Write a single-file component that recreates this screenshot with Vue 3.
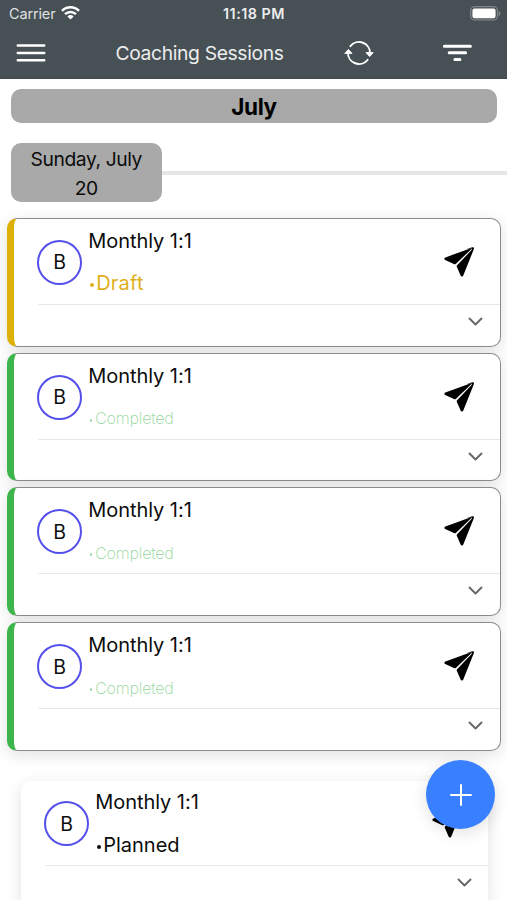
<script setup>
import { ref } from 'vue';

const month = ref('July');
const day = ref('Sunday, July 20');

const sessions = ref([
  { id: 1, initial: 'B', title: 'Monthly 1:1', status: 'Draft' },
  { id: 2, initial: 'B', title: 'Monthly 1:1', status: 'Completed' },
  { id: 3, initial: 'B', title: 'Monthly 1:1', status: 'Completed' },
  { id: 4, initial: 'B', title: 'Monthly 1:1', status: 'Completed' },
  { id: 5, initial: 'B', title: 'Monthly 1:1', status: 'Planned' }
]);
</script>

<template>
  <div class="screen">
    <header class="app-header">
      <div class="status-bar">
        <div class="carrier">
          <span class="carrier-name">Carrier</span>
          <svg class="wifi" width="19" height="14" viewBox="0 0 19 14">
            <g fill="none" stroke="#fff" stroke-width="2.5">
              <path d="M1 4.9a12 12 0 0 1 17 0" />
              <path d="M4 8.2a7.8 7.8 0 0 1 11 0" />
            </g>
            <path d="M9.5 13.6 6.4 10.4a4.4 4.4 0 0 1 6.2 0z" fill="#fff" />
          </svg>
        </div>
        <span class="clock">11:18 PM</span>
        <div class="battery-wrap">
          <svg width="31" height="15" viewBox="0 0 31 15">
            <rect x="0.7" y="0.7" width="26.8" height="13.2" rx="4" fill="none" stroke="#7f8589" stroke-width="1.3" />
            <rect x="2.4" y="2.5" width="23.2" height="9.8" rx="2.2" fill="#fff" />
            <path d="M28.8 5.2c2 .8 2 3.8 0 4.6z" fill="#8b9093" />
          </svg>
        </div>
      </div>

      <div class="toolbar">
        <button type="button" class="icon-btn menu-btn" aria-label="Menu">
          <svg width="30" height="20" viewBox="0 0 30 20">
            <path d="M1.8 2.5h26.4M1.8 9.9h26.4M1.8 17.3h26.4" stroke="#fff" stroke-width="2.5" stroke-linecap="round" />
          </svg>
        </button>
        <h1 class="page-title">Coaching Sessions</h1>
        <button type="button" class="icon-btn refresh-btn" aria-label="Refresh">
          <svg width="30" height="26" viewBox="0 0 30 26">
            <g fill="none" stroke="#fff" stroke-width="1.9" stroke-linecap="round">
              <path d="M6.4 6.2A11 11 0 0 1 26 13.6" />
              <path d="M23.6 19.8A11 11 0 0 1 4 12.4" />
            </g>
            <path d="M22 12.6h7.2l-3.6 4z M0.8 13.4H8L4.4 9.4z" fill="#fff" stroke="#fff" stroke-width="0.9" stroke-linejoin="round" />
          </svg>
        </button>
        <button type="button" class="icon-btn filter-btn" aria-label="Filter">
          <svg width="30" height="20" viewBox="0 0 30 20">
            <path d="M2.4 3.2h26M7.2 9.8h16.4M12.9 16.6h5" stroke="#fff" stroke-width="3" stroke-linecap="round" />
          </svg>
        </button>
      </div>
    </header>

    <main class="content">
      <div class="month-bar">{{ month }}</div>

      <div class="day-row">
        <div class="day-badge">{{ day }}</div>
        <div class="day-line"></div>
      </div>

      <div class="session-list">
        <article
          v-for="session in sessions"
          :key="session.id"
          class="session-card"
          :class="session.status.toLowerCase()"
        >
          <div class="card-main">
            <div class="avatar">{{ session.initial }}</div>
            <div class="card-text">
              <div class="card-title">{{ session.title }}</div>
              <div class="card-status"><span class="dot"></span>{{ session.status }}</div>
            </div>
            <svg class="send" width="30" height="30" viewBox="0 0 30 30">
              <path d="M0.5 11.2Q0.1 12.6 1.2 13L10.4 17.2Q11.2 17.5 11.8 16.9L27.2 2.2 26.8 1.2 1.4 10.4Q.7 10.7.5 11.2z" />
              <path d="M27.8 2.8 13.1 18.2Q12.5 18.8 12.8 19.7L16.7 28.7Q17.3 29.8 18.4 29.4 19 29.2 19.3 28.5L29.8 2.2Q30.2.7 29.4.3 28.7 0 27.4.4L23 2.1 27.4 1.6z" />
            </svg>
          </div>
          <div class="card-footer">
            <svg width="15" height="9" viewBox="0 0 15 9">
              <path d="M1.5 1.5 7.5 7.5 13.5 1.5" fill="none" stroke="#666" stroke-width="1.9" stroke-linecap="round" stroke-linejoin="round" />
            </svg>
          </div>
        </article>
      </div>
    </main>

    <button type="button" class="fab" aria-label="Add session">
      <svg width="22" height="22" viewBox="0 0 22 22">
        <path d="M11 1v20M1 11h20" stroke="#fff" stroke-width="2" stroke-linecap="round" />
      </svg>
    </button>
  </div>
</template>

<style>
body {
  background-color: #fff;
  overflow: hidden;
}
</style>

<style scoped>
.screen {
  position: relative;
  width: 507px;
  height: 900px;
  overflow: hidden;
  background-color: #fff;
  color: #0c0c0c;
  font-family: Inter, "Liberation Sans", sans-serif;
}

.app-header {
  height: 79px;
  box-sizing: border-box;
  background-color: #475055;
  border-bottom: 1px solid #3f474b;
  color: #fff;
}

.status-bar {
  display: grid;
  grid-template-columns: 1fr auto 1fr;
  align-items: center;
  height: 27px;
  padding: 0 6px 0 9px;
}

.carrier {
  display: flex;
  align-items: center;
  gap: 6px;
}

.carrier-name {
  font-size: 14.5px;
  letter-spacing: -0.15px;
  color: #dfe1e2;
}

.wifi {
  margin-top: -2px;
}

.clock {
  margin-left: -3px;
  margin-right: -1px;
  font-size: 14.3px;
  font-weight: 600;
  letter-spacing: 0.5px;
  color: #eceded;
}

.battery-wrap {
  display: flex;
  justify-content: flex-end;
}

.toolbar {
  display: flex;
  align-items: center;
  height: 52px;
  padding-left: 16px;
}

.icon-btn {
  display: flex;
  padding: 0;
  border: 0;
  background: none;
}

.page-title {
  width: 168px;
  margin: 0 0 0 69.5px;
  font-size: 19.3px;
  font-weight: 400;
  letter-spacing: -0.36px;
  white-space: nowrap;
  color: #eceeee;
}

.refresh-btn {
  margin-left: 60px;
}

.filter-btn {
  margin-left: 68.5px;
}

.content {
  padding-top: 10.4px;
}

.month-bar {
  height: 34px;
  margin: 0 10px 0 11px;
  border-radius: 10px;
  background-color: #a9a9a9;
  color: #000;
  font-size: 22.5px;
  font-weight: 700;
  letter-spacing: -0.4px;
  line-height: 35px;
  text-align: center;
}

.day-row {
  display: flex;
  align-items: center;
  margin-top: 19.2px;
  padding-left: 11px;
}

.day-badge {
  box-sizing: border-box;
  width: 150.5px;
  height: 59px;
  padding: 2px 16px 0;
  border-radius: 10px;
  background-color: #a9a9a9;
  font-size: 19.3px;
  letter-spacing: -0.42px;
  line-height: 29px;
  text-align: center;
}

.day-line {
  flex: 1;
  height: 4px;
  margin-top: 1px;
  background-color: #e6e6e6;
}

.session-list {
  display: flex;
  flex-direction: column;
  gap: 6px;
  padding: 16.2px 6px 0 7px;
}

.session-card {
  box-sizing: border-box;
  height: 128.8px;
  flex-shrink: 0;
  border: 1px solid #8c8c8c;
  border-left-width: 7px;
  border-radius: 10px;
  background-color: #fff;
  box-shadow: 0 4px 16px rgba(0, 0, 0, 0.12);
}

.session-card.draft {
  border-left-color: #deb10a;
}

.session-card.completed {
  border-left-color: #3eb54c;
}

.session-card.planned {
  margin: 24px 13px 0 14px;
  border: 0;
}

.card-main {
  display: flex;
  align-items: center;
  box-sizing: border-box;
  height: 86px;
  margin-left: 24px;
  padding: 1px 26px 0 0;
  border-bottom: 1px solid #e8e8e8;
}

.avatar {
  display: flex;
  align-items: center;
  justify-content: center;
  box-sizing: border-box;
  width: 45px;
  height: 45px;
  margin: 1px 0 0 -0.8px;
  border: 2px solid #5650ea;
  border-radius: 50%;
  font-size: 19.5px;
}

.card-text {
  flex: 1;
  padding-left: 6px;
}

.card-title,
.card-status {
  height: 43px;
  font-size: 20px;
  line-height: 44px;
}

.card-title {
  letter-spacing: -0.05px;
}

.card-status {
  display: flex;
  align-items: center;
  padding-left: 2px;
}

.dot {
  width: 4px;
  height: 4px;
  margin: 4px 2px 0 0;
  border-radius: 50%;
  background-color: currentColor;
}

.draft .card-status {
  color: #dfb01c;
  letter-spacing: 0.2px;
}

.completed .card-status {
  color: #93d69b;
  font-size: 16px;
  font-weight: 200;
  letter-spacing: -0.2px;
  line-height: 50px;
}

.completed .dot {
  width: 2px;
  height: 3px;
  margin-right: 3px;
}

.planned .card-main {
  padding-top: 0;
  height: 85.5px;
}

.planned .card-footer {
  padding-right: 16px;
}

.card-footer {
  display: flex;
  justify-content: flex-end;
  padding: 12px 17px 0 0;
}

/* floating add button sits over the list */
.fab {
  position: absolute;
  right: 12px;
  bottom: 71px;
  display: flex;
  align-items: center;
  justify-content: center;
  width: 69px;
  height: 69px;
  padding: 0;
  border: 0;
  border-radius: 50%;
  background-color: #3880ff;
  box-shadow: 0 4px 16px rgba(0, 0, 0, 0.12);
}
</style>
